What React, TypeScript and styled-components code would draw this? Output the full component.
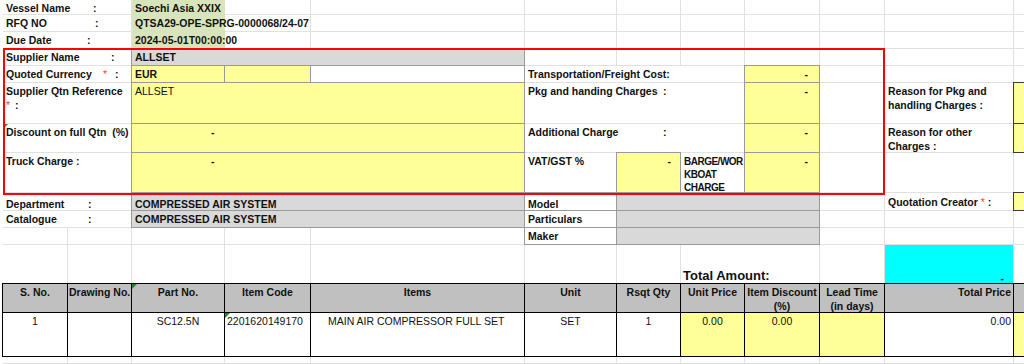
import React from 'react'
import styled, { createGlobalStyle, css } from 'styled-components'

// sheet geometry, px (last column runs past the window edge)
const COLS = [65, 64, 93, 86, 214, 92, 64, 64, 75, 65, 129, 12]
const ROWS = [15, 17, 17, 17, 17, 41, 29, 40, 18, 17, 17, 39, 29, 44, 7]

const GRID = '#e1e1e1'
const EDGE = '#9a9a9a'
const DARK = '#3a3a3a'
const YELLOW = '#ffff99'
const GRAY = '#d9d9d9'
const HEAD = '#c0c0c0'
const OLIVE = '#d8e4bc'
const CYAN = '#00ffff'

const GlobalStyle = createGlobalStyle`
  *, *::before, *::after { box-sizing: border-box; }
  html, body { margin: 0; padding: 0; background: #fff; overflow: hidden; }
  body { font-family: 'Liberation Sans', Arial, sans-serif; }
  #root { width: 1024px; overflow: hidden; }
`

const Sheet = styled.div`
  display: grid;
  grid-template-columns: ${COLS.map((w) => `${w}px`).join(' ')};
  grid-template-rows: ${ROWS.map((h) => `${h}px`).join(' ')};
  width: max-content;
  padding-left: 3px;
  font-size: 10.5px;
  color: #111;
`

const GridLine = styled.div<{ $r: number; $c: number }>`
  grid-row: ${(p) => p.$r};
  grid-column: ${(p) => p.$c};
  border-right: 1px solid ${GRID};
  border-bottom: 1px solid ${GRID};
`

interface CellProps {
  $r: number
  $c: number
  $rs?: number
  $cs?: number
  $bg?: string
  $box?: string
  $bare?: boolean
  $align?: 'left' | 'center' | 'right'
  $light?: boolean
  $pl?: number
  $pr?: number
  $pt?: number
  $flag?: boolean
}

const Cell = styled.div<CellProps>`
  position: relative;
  grid-row: ${(p) => p.$r} / span ${(p) => p.$rs ?? 1};
  grid-column: ${(p) => p.$c} / span ${(p) => p.$cs ?? 1};
  background: ${(p) => p.$bg ?? '#fff'};
  padding: ${(p) => p.$pt ?? 1}px ${(p) => p.$pr ?? 3}px 0 ${(p) => p.$pl ?? 3}px;
  text-align: ${(p) => p.$align ?? 'left'};
  font-weight: ${(p) => (p.$light ? 400 : 700)};
  line-height: 14px;
  white-space: nowrap;
  overflow: hidden;

  ${(p) =>
    p.$box
      ? css`
          margin: -1px 0 0 -1px;
          border: 1px solid ${p.$box};
          z-index: 1;
        `
      : !p.$bare &&
        css`
          border-right: 1px solid ${GRID};
          border-bottom: 1px solid ${GRID};
        `}

  ${(p) =>
    p.$flag &&
    css`
      &::before {
        content: '';
        position: absolute;
        top: 0;
        left: 0;
        border-top: 5px solid #1e8c1e;
        border-right: 5px solid transparent;
      }
    `}
`

const TotalCell = styled(Cell)`
  font-size: 13px;
  line-height: 16px;
  overflow: visible;
`

const Label = styled.span<{ $w: number }>`
  display: inline-block;
  width: ${(p) => p.$w}px;
`

const Star = styled.span<{ $m?: number }>`
  color: #ff3b3b;
  font-weight: 400;
  margin-right: ${(p) => p.$m ?? 0}px;
`

const Narrow = styled.div`
  font-size: 10px;
  letter-spacing: -0.5px;
  line-height: 13px;
`

// red outline around the supplier block
const Frame = styled.div`
  grid-row: 4 / span 5;
  grid-column: 1 / span 10;
  margin: -1px 0 -2px 0;
  border: 2px solid #ff0000;
  z-index: 2;
  pointer-events: none;
`

const heads: { t: React.ReactNode; right?: boolean; flag?: boolean }[] = [
  { t: 'S. No.' },
  { t: 'Drawing No.' },
  { t: 'Part No.', flag: true },
  { t: 'Item Code' },
  { t: 'Items' },
  { t: 'Unit' },
  { t: 'Rsqt Qty' },
  { t: 'Unit Price' },
  { t: <>Item Discount<br />(%)</> },
  { t: <>Lead Time<br />(in days)</> },
  { t: 'Total Price', right: true },
  { t: '' },
]

const line: { t: string; bg?: string; align?: 'left' | 'center' | 'right'; pl?: number; pr?: number; flag?: boolean }[] = [
  { t: '1', align: 'center' },
  { t: '' },
  { t: 'SC12.5N', align: 'center' },
  { t: '2201620149170', pl: 2, flag: true },
  { t: 'MAIN AIR COMPRESSOR FULL SET', pl: 17 },
  { t: 'SET', align: 'center' },
  { t: '1', align: 'center' },
  { t: '0.00', bg: YELLOW, align: 'center' },
  { t: '0.00', bg: YELLOW, align: 'center' },
  { t: '', bg: YELLOW },
  { t: '0.00', align: 'right', pr: 2 },
  { t: '', bg: YELLOW },
]

export default function App() {
  const cells = []
  for (let r = 1; r <= ROWS.length; r++) {
    for (let c = 1; c <= COLS.length; c++) {
      cells.push(<GridLine key={`${r}-${c}`} $r={r} $c={c} />)
    }
  }

  return (
    <>
      <GlobalStyle />
      <Sheet>
        {cells}

        {/* vessel header */}
        <Cell $r={1} $c={1} $cs={2}><Label $w={87}>Vessel Name</Label>:</Cell>
        <Cell $r={2} $c={1} $cs={2}><Label $w={89}>RFQ NO</Label>:</Cell>
        <Cell $r={3} $c={1} $cs={2}><Label $w={81}>Due Date</Label>:</Cell>
        <Cell $r={1} $rs={3} $c={3} $bg={OLIVE} $bare />
        <Cell $r={1} $c={3} $cs={2} $bg="transparent" $bare>Soechi Asia XXIX</Cell>
        <Cell $r={2} $c={3} $cs={2} $bg="transparent" $bare>QTSA29-OPE-SPRG-0000068/24-07</Cell>
        <Cell $r={3} $c={3} $cs={2} $bg="transparent" $bare>2024-05-01T00:00:00</Cell>

        {/* supplier block */}
        <Cell $r={4} $c={1} $cs={2}><Label $w={105}>Supplier Name</Label>:</Cell>
        <Cell $r={4} $c={3} $cs={3} $bg={GRAY} $box={EDGE}>ALLSET</Cell>

        <Cell $r={5} $c={1} $cs={2}><Label $w={97}>Quoted Currency</Label><Star $m={8}>*</Star>:</Cell>
        <Cell $r={5} $c={3} $bg={YELLOW} $box={EDGE}>EUR</Cell>
        <Cell $r={5} $c={4} $bg={YELLOW} $box={EDGE} />
        <Cell $r={5} $c={5} $box={EDGE} />
        <Cell $r={5} $c={6} $cs={3}>Transportation/Freight Cost:</Cell>
        <Cell $r={5} $c={9} $bg={YELLOW} $box={EDGE} $align="right" $pr={11}>-</Cell>

        <Cell $r={6} $c={1} $cs={2}>Supplier Qtn Reference<br /><Star $m={5}>*</Star>:</Cell>
        <Cell $r={6} $c={3} $cs={3} $bg={YELLOW} $box={EDGE} $light>ALLSET</Cell>
        <Cell $r={6} $c={6} $cs={3}><Label $w={135}>Pkg and handing Charges</Label>:</Cell>
        <Cell $r={6} $c={9} $bg={YELLOW} $box={EDGE} $align="right" $pr={11}>-</Cell>
        <Cell $r={6} $c={11}>Reason for Pkg and<br />handling Charges :</Cell>
        <Cell $r={6} $c={12} $bg={YELLOW} $box={DARK} />

        <Cell $r={7} $c={1} $cs={2} $flag>Discount on full Qtn&nbsp; (%)</Cell>
        <Cell $r={7} $c={3} $cs={3} $bg={YELLOW} $box={EDGE} $pl={79}>-</Cell>
        <Cell $r={7} $c={6} $cs={3}><Label $w={135}>Additional Charge</Label>:</Cell>
        <Cell $r={7} $c={9} $bg={YELLOW} $box={EDGE} $align="right" $pr={11}>-</Cell>
        <Cell $r={7} $c={11}>Reason for other<br />Charges :</Cell>
        <Cell $r={7} $c={12} $bg={YELLOW} $box={DARK} />

        <Cell $r={8} $c={1} $cs={2}>Truck Charge :</Cell>
        <Cell $r={8} $c={3} $cs={3} $bg={YELLOW} $box={EDGE} $pl={79}>-</Cell>
        <Cell $r={8} $c={6}>VAT/GST %</Cell>
        <Cell $r={8} $c={7} $bg={YELLOW} $box={EDGE} $align="right" $pr={9}>-</Cell>
        <Cell $r={8} $c={8} $pt={2}><Narrow>BARGE/WOR<br />KBOAT<br />CHARGE</Narrow></Cell>
        <Cell $r={8} $c={9} $bg={YELLOW} $box={EDGE} $align="right" $pr={11}>-</Cell>

        <Frame />

        {/* catalogue block */}
        <Cell $r={9} $c={1} $cs={2} $pt={4}><Label $w={82}>Department</Label>:</Cell>
        <Cell $r={9} $c={3} $cs={3} $bg={GRAY} $box={EDGE} $pt={4}>COMPRESSED AIR SYSTEM</Cell>
        <Cell $r={9} $c={6} $box={EDGE} $pt={4}>Model</Cell>
        <Cell $r={9} $c={7} $cs={3} $bg={GRAY} $box={EDGE} />
        <Cell $r={9} $c={11} $pt={2}>Quotation Creator <Star>*</Star> :</Cell>
        <Cell $r={9} $c={12} $bg={YELLOW} $box={DARK} />

        <Cell $r={10} $c={1} $cs={2}><Label $w={82}>Catalogue</Label>:</Cell>
        <Cell $r={10} $c={3} $cs={3} $bg={GRAY} $box={EDGE}>COMPRESSED AIR SYSTEM</Cell>
        <Cell $r={10} $c={6} $box={EDGE}>Particulars</Cell>
        <Cell $r={10} $c={7} $cs={3} $bg={GRAY} $box={EDGE} />

        <Cell $r={11} $c={6} $box={EDGE}>Maker</Cell>
        <Cell $r={11} $c={7} $cs={3} $bg={GRAY} $box={EDGE} />

        {/* totals */}
        <TotalCell $r={12} $c={8} $cs={2} $pl={2} $pt={23}>Total Amount:</TotalCell>
        <Cell $r={12} $c={11} $bg={CYAN} $align="right" $pr={9} $pt={26}>-</Cell>

        {/* item table */}
        {heads.map((h, i) => (
          <Cell
            key={`h${i}`}
            $r={13}
            $c={i + 1}
            $bg={HEAD}
            $box="#000"
            $align={h.right ? 'right' : 'center'}
            $pl={1}
            $pr={h.right ? 2 : 1}
            $flag={h.flag}
          >
            {h.t}
          </Cell>
        ))}
        {line.map((d, i) => (
          <Cell
            key={`d${i}`}
            $r={14}
            $c={i + 1}
            $bg={d.bg}
            $box="#000"
            $light
            $align={d.align}
            $pl={d.pl ?? 1}
            $pr={d.pr ?? 1}
            $flag={d.flag}
          >
            {d.t}
          </Cell>
        ))}
      </Sheet>
    </>
  )
}
